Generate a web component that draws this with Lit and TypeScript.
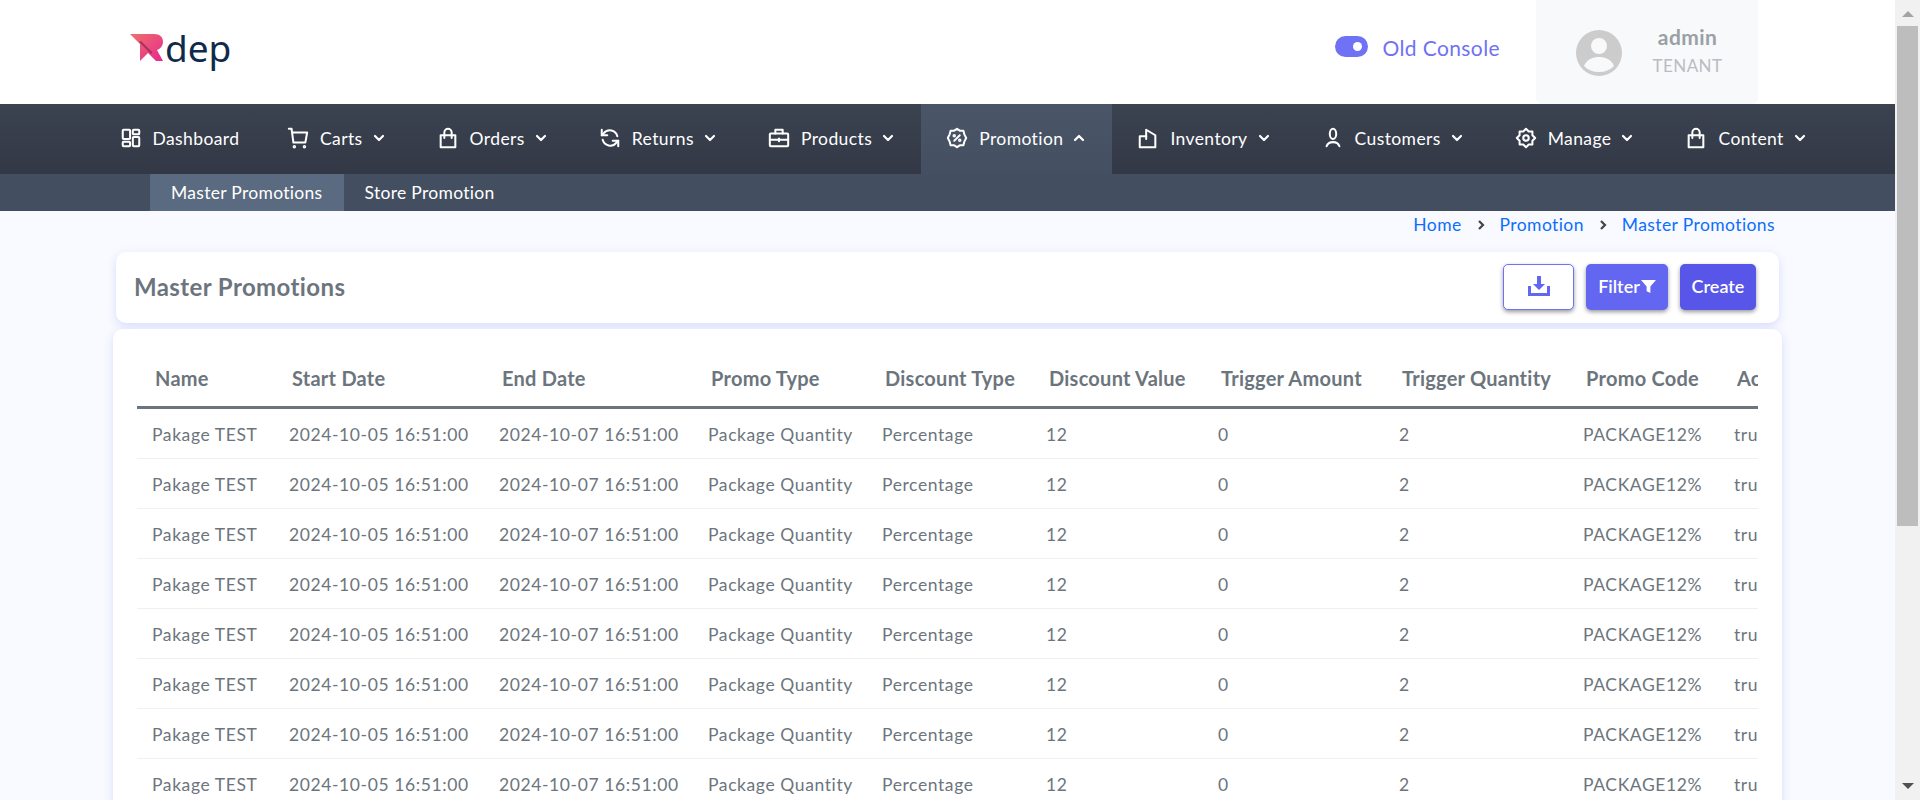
import { LitElement, html, css, svg } from 'lit';
import { customElement } from 'lit/decorators.js';

const icon = (body: unknown) => html`<svg class="ico" viewBox="0 0 24 24" fill="none" stroke="currentColor" stroke-width="2.2" stroke-linecap="round" stroke-linejoin="round">${body}</svg>`;

const bag = svg`<path d="M4 9h16v13H4z" stroke-linecap="square"/><path d="M8 12V6a4 4 0 0 1 8 0v6"/>`;

const navItems = [
  { label: 'Dashboard', noChevron: true, icon: svg`<rect x="3" y="3" width="8" height="10" rx="1"/><rect x="14" y="3" width="7" height="5" rx="1"/><rect x="3" y="16" width="8" height="5" rx="1"/><rect x="14" y="11" width="7" height="10" rx="1"/>` },
  { label: 'Carts', icon: svg`<path d="M2 2h3l2 15h13l2-11H6"/><circle cx="8" cy="21.5" r=".8"/><circle cx="19" cy="21.5" r=".8"/>` },
  { label: 'Orders', icon: bag },
  { label: 'Returns', icon: svg`<path d="M20 10a8.5 8.5 0 0 0-15-3L3 9"/><path d="M3 3v6h6"/><path d="M4 14a8.5 8.5 0 0 0 15 3l2-2"/><path d="M21 21v-6h-6"/>` },
  { label: 'Products', icon: svg`<rect x="2" y="7" width="20" height="14" rx="1"/><path d="M8 7V3h8v4"/><path d="M2 14h20"/><path d="M12 12.5v3"/>` },
  { label: 'Promotion', active: true, icon: svg`<path d="M12 2l3 2h4l1 4 2 4-2 4-1 4h-4l-3 2-3-2H5l-1-4-2-4 2-4 1-4h4z"/><path d="M15 9l-6 6"/><circle cx="9" cy="9.5" r=".8"/><circle cx="15" cy="14.5" r=".8"/>` },
  { label: 'Inventory', icon: svg`<path d="M3 10h7V3l10 6v13H3z" stroke-linecap="square"/><path d="M10 10v3"/>` },
  { label: 'Customers', icon: svg`<ellipse cx="12" cy="7.5" rx="3.5" ry="5.5"/><path d="M5 21c1-3 3.5-4.500 7-4.500s6 1.500 7 4.500"/>` },
  { label: 'Manage', icon: svg`<path d="M12 2l3 3h4v4l3 3-3 3v4h-4l-3 3-3-3H5v-4l-3-3 3-3V5h4z"/><circle cx="12" cy="12" r="3"/>` },
  { label: 'Content', icon: bag },
];

const columns = [
  { title: 'Name', width: 137, value: 'Pakage TEST' },
  { title: 'Start Date', width: 210, value: '2024-10-05 16:51:00' },
  { title: 'End Date', width: 209, value: '2024-10-07 16:51:00' },
  { title: 'Promo Type', width: 174, value: 'Package Quantity' },
  { title: 'Discount Type', width: 164, value: 'Percentage' },
  { title: 'Discount Value', width: 172, value: '12' },
  { title: 'Trigger Amount', width: 181, value: '0' },
  { title: 'Trigger Quantity', width: 184, value: '2' },
  { title: 'Promo Code', width: 151, value: 'PACKAGE12%' },
  { title: 'Active', width: 120, value: 'true' },
];

const rows = Array.from({ length: 15 });

const chevron = (up = false) => html`<svg class="chev" viewBox="0 0 14 14" fill="none" stroke="currentColor" stroke-width="2.2" stroke-linecap="round" stroke-linejoin="round"><path d=${up ? 'M3 9l4-4 4 4' : 'M3 5l4 4 4-4'}/></svg>`;

@customElement('app-root')
export class AppRoot extends LitElement {
  static styles = css`
    :host {
      display: flex;
      height: 800px;
      overflow: hidden;
      font-family: 'Lato', 'Noto Sans', sans-serif;
      font-size: 17.5px;
      letter-spacing: 0.4px;
    }
    .page {
      flex: 1;
      min-width: 0;
      background: #f8faff;
    }
    .bar {
      width: 25px;
      flex: none;
      background: #f1f1f1;
      display: flex;
      flex-direction: column;
      align-items: center;
      padding: 11px 0 0;
      box-sizing: border-box;
    }
    .bar .up { width: 0; height: 0; border: 6px solid transparent; border-top: none; border-bottom: 6px solid #a3a3a3; }
    .bar .thumb { width: 21px; height: 500px; background: #bdbdbd; margin-top: 9px; }
    .bar .down { width: 0; height: 0; border: 6px solid transparent; border-bottom: none; border-top: 6px solid #505050; margin-top: auto; margin-bottom: 11px; }

    .top {
      height: 104px;
      background: #fff;
      display: flex;
      align-items: center;
      padding: 0 137px 0 130px;
    }
    .logo { display: flex; align-items: flex-start; height: 36px; margin-bottom: 2px; }
    .logo svg { width: 36px; height: 27px; margin-top: 1px; flex: none; }
    .logo span {
      font-family: 'Noto Sans', sans-serif;
      font-size: 37px;
      line-height: 30px;
      color: #0f2a4a;
      margin-left: -1px;
      letter-spacing: 0;
    }
    .console { margin-left: auto; display: flex; align-items: center; color: #6f72f5; font-size: 21px; margin-bottom: 12px; }
    .console span { padding-top: 3px; }
    .switch {
      width: 33px;
      height: 21px;
      border-radius: 11px;
      background: #6f72f5;
      margin-right: 14px;
      display: flex;
      justify-content: flex-end;
      align-items: center;
      padding-right: 6px;
      box-sizing: border-box;
    }
    .switch i { width: 9px; height: 9px; border-radius: 50%; background: #fff; }
    .user {
      margin-left: 36px;
      width: 222px;
      height: 104px;
      background: #f8f9fa;
      border-radius: 0 0 6px 6px;
      display: flex;
      align-items: center;
      box-sizing: border-box;
      padding-left: 40px;
    }
    .user svg { width: 46px; height: 46px; margin-top: 2px; }
    .who { width: 105px; margin-left: 13px; text-align: center; }
    .who b { display: block; color: #9aa0a6; font-size: 21px; line-height: 28px; }
    .who span { display: block; color: #b9bdc1; font-size: 17px; line-height: 30px; }

    nav {
      height: 70px;
      background: linear-gradient(#3b4250, #323846);
      display: flex;
      padding-left: 94px;
      color: #fff;
    }
    .item {
      display: flex;
      align-items: center;
      padding: 0 25.5px 2px;
    }
    .item:first-child { padding-right: 22px; }
    .item.active { background: linear-gradient(#4a5667, #445062); }
    .ico { width: 22px; height: 22px; margin-right: 11px; flex: none; }
    .chev { width: 14px; height: 14px; margin-left: 9px; flex: none; }

    .sub {
      height: 37px;
      background: #434f60;
      display: flex;
      padding-left: 150px;
      color: #fff;
      letter-spacing: 0.3px;
    }
    .sub a { display: flex; align-items: center; padding: 0 21px; }
    .sub a.active { background: #5a6a80; }

    main { padding: 0 113px 40px; }
    .crumbs {
      height: 27px;
      margin-bottom: 14px;
      display: flex;
      align-items: center;
      justify-content: flex-end;
      gap: 13px;
      padding-right: 7px;
      color: #0d6efd;
    }
    .crumbs svg { width: 12px; height: 12px; color: #444; }

    .card {
      background: #fff;
      border-radius: 10px;
      box-shadow: 0 3px 10px rgba(99, 102, 241, 0.2);
    }
    .head {
      margin: 0 3px 6px;
      height: 71px;
      display: flex;
      align-items: center;
      padding: 0 23px 0 18px;
    }
    .head h1 { margin: 0 0 2px; font-size: 24px; font-weight: 700; color: #6c757d; }
    .btns { margin-left: auto; display: flex; align-items: center; gap: 12px; margin-bottom: 1px; }
    button {
      font: 600 18px 'Lato', 'Noto Sans', sans-serif;
      height: 46px;
      border-radius: 5px;
      border: none;
      padding: 0 0 2px;
      color: #fff;
      display: flex;
      align-items: center;
      justify-content: center;
      box-shadow: 0 2px 4px rgba(0, 0, 0, 0.4);
    }
    .dl { width: 71px; background: #fff; border: 1px solid #6f72f5; color: #6366f1; }
    .dl svg { width: 24px; height: 24px; }
    .filter { width: 82px; background: #6366f1; }
    .filter svg { width: 15px; height: 15px; margin-left: 1px; }
    .create { width: 76px; background: #5856e8; }

    .table-card { padding: 0 24px; }
    .scroll { overflow: hidden; }
    table { border-collapse: collapse; table-layout: fixed; width: 1702px; color: #6c757d; }
    th {
      height: 78px;
      text-align: left;
      vertical-align: bottom;
      padding: 0 0 16px 18px;
      box-sizing: border-box;
      font-size: 20px;
      font-weight: 700;
      letter-spacing: 0.25px;
      border-bottom: 3px solid #6c757d;
      white-space: nowrap;
      overflow: hidden;
    }
    td {
      height: 46px;
      padding: 3px 0 0 15px;
      letter-spacing: 0.6px;
      border-bottom: 1px solid #eef0f2;
      white-space: nowrap;
      overflow: hidden;
    }
  `;

  render() {
    return html`
      <div class="page">
        <div class="top">
          <div class="logo">
            <svg viewBox="0 0 36 27">
              <defs><linearGradient id="lg" x1="0" y1="0" x2="1" y2="1"><stop offset="0" stop-color="#f0706a"/><stop offset="1" stop-color="#e52a8e"/></linearGradient></defs>
              <path d="M0 0H24C30 0 33 3 33 8C33 12 30 15 27 16L33 27H26L18 19L10 27V10Z" fill="url(#lg)"/>
              <path d="M9 8L21 20l1.500-1.500L11 7z" fill="#a8325f"/>
            </svg>
            <span>dep</span>
          </div>
          <div class="console"><div class="switch"><i></i></div><span>Old Console</span></div>
          <div class="user">
            <svg viewBox="0 0 46 46">
              <circle cx="23" cy="23" r="23" fill="#ccc"/>
              <circle cx="23" cy="16" r="8" fill="#f8f9fa"/>
              <path d="M8 36c3-7 9-9 15-9s12 2 15 9c-4 4-9 6-15 6s-11-2-15-6z" fill="#f8f9fa"/>
            </svg>
            <div class="who"><b>admin</b><span>TENANT</span></div>
          </div>
        </div>
        <nav>
          ${navItems.map(n => html`
            <div class="item ${n.active ? 'active' : ''}">
              ${icon(n.icon)}${n.label}${n.noChevron ? '' : chevron(n.active)}
            </div>`)}
        </nav>
        <div class="sub">
          <a class="active">Master Promotions</a>
          <a>Store Promotion</a>
        </div>
        <main>
          <div class="crumbs">
            Home
            <svg viewBox="0 0 12 12" fill="none" stroke="currentColor" stroke-width="2.2"><path d="M4 2l4 4-4 4"/></svg>
            Promotion
            <svg viewBox="0 0 12 12" fill="none" stroke="currentColor" stroke-width="2.2"><path d="M4 2l4 4-4 4"/></svg>
            Master Promotions
          </div>
          <div class="card head">
            <h1>Master Promotions</h1>
            <div class="btns">
              <button class="dl">
                <svg viewBox="0 0 24 24" fill="currentColor"><path d="M10 2h4v8h4l-6 6-6-6h4z"/><path d="M1 12h3v7h16v-7h3v10H1z"/></svg>
              </button>
              <button class="filter">Filter<svg viewBox="0 0 16 16" fill="currentColor"><path d="M0 1h16l-6 7v7l-4-2V8z"/></svg></button>
              <button class="create">Create</button>
            </div>
          </div>
          <div class="card table-card">
            <div class="scroll">
              <table>
                <colgroup>${columns.map(c => html`<col style="width:${c.width}px">`)}</colgroup>
                <thead><tr>${columns.map(c => html`<th>${c.title}</th>`)}</tr></thead>
                <tbody>${rows.map(() => html`<tr>${columns.map(c => html`<td>${c.value}</td>`)}</tr>`)}</tbody>
              </table>
            </div>
          </div>
        </main>
      </div>
      <div class="bar"><i class="up"></i><div class="thumb"></div><i class="down"></i></div>
    `;
  }
}
